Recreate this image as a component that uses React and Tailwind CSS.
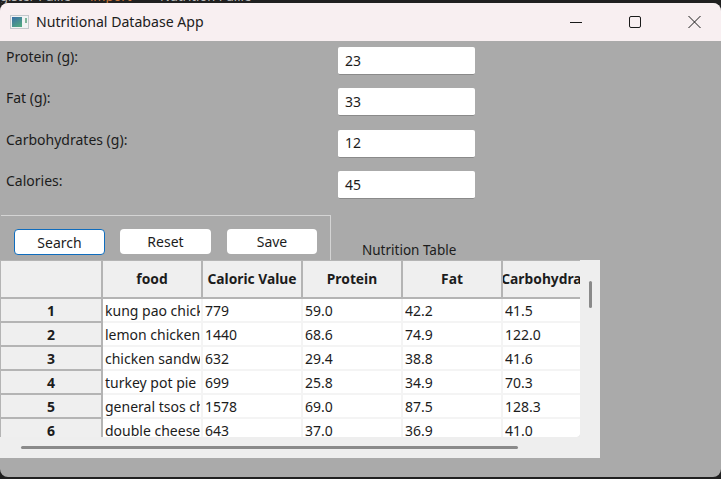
const ROWS = [
  ['1', 'kung pao chicken', '779', '59.0', '42.2', '41.5'],
  ['2', 'lemon chicken', '1440', '68.6', '74.9', '122.0'],
  ['3', 'chicken sandwich', '632', '29.4', '38.8', '41.6'],
  ['4', 'turkey pot pie', '699', '25.8', '34.9', '70.3'],
  ['5', 'general tsos chicken', '1578', '69.0', '87.5', '128.3'],
  ['6', 'double cheeseburger', '643', '37.0', '36.9', '41.0'],
];

const FIELDS = [
  ['Protein (g):', '23'],
  ['Fat (g):', '33'],
  ['Carbohydrates (g):', '12'],
  ['Calories:', '45'],
];

const HEADERS = ['food', 'Caloric Value', 'Protein', 'Fat', 'Carbohydrates'];
const COLS = 'grid grid-cols-[102px_100px_100px_100px_100px_100px]';

const App = () => {
  return (
    <div className="relative w-[721px] h-[479px] overflow-hidden bg-[#202020] pb-[2px] font-['Noto_Sans',sans-serif] text-[14px] text-[#1c1c1c]">
      {/* Bit of the editor behind the window */}
      <div className="h-[3px] overflow-hidden flex text-[13px] leading-[14px] text-[#b9b9b9]">
        <span className="-mt-[11px] w-[90px] shrink-0">gister Paille</span>
        <span className="-mt-[11px] w-[70px] shrink-0 text-[#c9763a]">import</span>
        <span className="-mt-[11px] whitespace-nowrap">Nutrition Paille</span>
      </div>

      <div className="h-[474px] flex flex-col rounded-lg overflow-hidden bg-[#aaaaaa]">
        {/* Title bar */}
        <div className="h-[38px] shrink-0 flex items-center bg-[#f8eff1] pl-[10px] pr-[20px]">
          <svg width="19" height="14" viewBox="0 0 19 14">
            <defs>
              <linearGradient id="ico" x1="0" y1="0" x2="0.6" y2="1">
                <stop offset="0" stopColor="#3a6ea8" />
                <stop offset="1" stopColor="#4fa583" />
              </linearGradient>
            </defs>
            <rect x="0.5" y="0.5" width="18" height="13" fill="#f1f3f4" stroke="#c4c8cc" />
            <rect x="2" y="2" width="10" height="10" fill="url(#ico)" />
            <rect x="15" y="3" width="2" height="5" fill="#7fb59a" />
          </svg>
          <span className="ml-[7px] text-[14.1px] text-[#202020]">Nutritional Database App</span>
          <div className="ml-auto flex items-center">
            <svg width="59" height="14" viewBox="0 0 59 14" stroke="#1a1a1a" fill="none">
              <path d="M0 7.5H12" />
            </svg>
            <svg width="59" height="14" viewBox="0 0 59 14" stroke="#1a1a1a" fill="none">
              <rect x="0.5" y="1.5" width="11" height="11" rx="1.5" />
            </svg>
            <svg width="13" height="14" viewBox="0 0 13 14" stroke="#1a1a1a" fill="none">
              <path d="M0.5 1L12.5 13M12.5 1L0.5 13" />
            </svg>
          </div>
        </div>

        {/* Form */}
        <div className="h-[174px] shrink-0 flex flex-col pt-[6px] gap-[13.4px]">
          {FIELDS.map(([label, value]) => (
            <div key={label} className="h-[28px] flex items-start pl-[6px]">
              <span className="w-[332px] leading-[20px]">{label}</span>
              <div className="w-[137px] h-[28px] flex items-center pl-[7px] pb-px bg-white rounded-[2px] border-b border-[#8a8a8a]">
                {value}
              </div>
            </div>
          ))}
        </div>

        {/* Buttons and caption */}
        <div className="h-[45px] shrink-0 flex">
          <div className="w-[330px] ml-[1px] border-t border-r border-[#d4d4d4] flex items-start pt-[13px] pl-[13px]">
            <button className="w-[91px] h-[26px] pt-px bg-white rounded-[4px] border border-[#0f6cbd] leading-none">Search</button>
            <button className="w-[91px] h-[25px] ml-[15px] pt-px bg-white rounded-[4px] leading-none">Reset</button>
            <button className="w-[90px] h-[25px] ml-[16px] pt-px bg-white rounded-[4px] leading-none">Save</button>
          </div>
          <span className="ml-[31px] mt-[25px] leading-[20px] text-[13.5px]">Nutrition Table</span>
        </div>

        {/* Table */}
        <div className="relative w-[600px] h-[198px] shrink-0 bg-[#eeeeee]">
          <div className="w-[580px] h-[177px] overflow-hidden bg-white rounded-br-[3px]">
            <div className={`${COLS} h-[39px] bg-[#b4b4b4] pl-[1px] pt-[1px] text-[13.8px]`}>
              <div className="bg-[#efefef] border-r-2 border-b-2 border-[#b4b4b4]" />
              {HEADERS.map((h) => (
                <div
                  key={h}
                  className="bg-[#efefef] border-r-2 border-b-2 border-[#b4b4b4] flex items-center justify-center overflow-hidden whitespace-nowrap font-bold"
                >
                  {h}
                </div>
              ))}
            </div>
            {ROWS.map(([num, ...cells]) => (
              <div key={num} className={`${COLS} h-[24px] pl-[1px] bg-[#b4b4b4]`}>
                <div className="bg-[#efefef] border-r-2 border-b-2 border-[#b4b4b4] flex items-center justify-center font-bold">
                  {num}
                </div>
                {cells.map((c, i) => (
                  <div
                    key={i}
                    className="bg-white border-r-2 border-b-2 border-[#f4f4f4] pl-[2px] pr-px pt-px"
                  >
                    <div className="overflow-hidden whitespace-nowrap leading-[21px]">{c}</div>
                  </div>
                ))}
              </div>
            ))}
          </div>
          {/* Scrollbars */}
          <div className="absolute right-[8px] top-[21px] w-[3px] h-[27px] rounded-full bg-[#8a8a8a]" />
          <div className="absolute left-[21px] top-[186px] w-[497px] h-[3px] rounded-full bg-[#8a8a8a]" />
        </div>
      </div>
    </div>
  );
};

export default App;
